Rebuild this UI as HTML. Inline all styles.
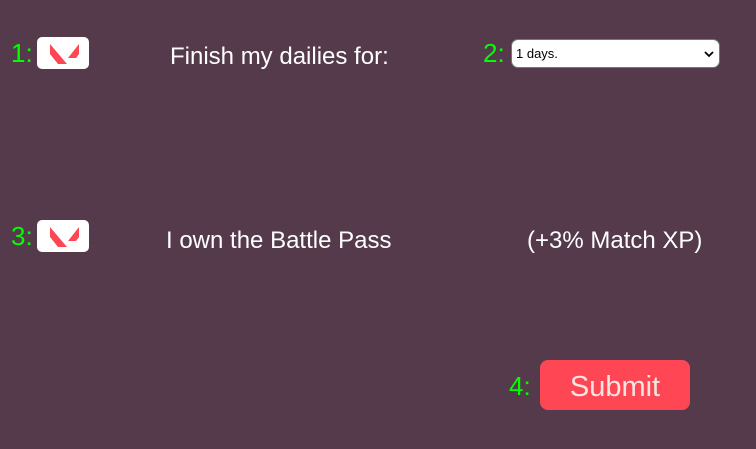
<!DOCTYPE html>
<html><head><style>
html,body{margin:0;padding:0;}
body{width:756px;height:449px;background:#553a4c;position:relative;overflow:hidden;font-family:"Liberation Sans",Arial,sans-serif;}
.n{position:absolute;color:#00ff00;font-size:26px;line-height:28px;}
.logo{position:absolute;width:52px;height:32px;background:#fff;border-radius:5px;}
.t{position:absolute;color:#fff;font-size:24px;line-height:26px;white-space:nowrap;}
.sel{position:absolute;left:511px;top:39px;width:209px;height:29px;background:#fff;border:1px solid #777;border-radius:7px;box-sizing:border-box;}
.btn{position:absolute;left:540px;top:360px;width:150px;height:50px;background:#ff4655;border-radius:8px;color:#f5e6e0;font-size:29px;line-height:54px;text-align:center;}
</style></head><body>
<div class="n" style="left:11px;top:39px">1:</div>
<div class="logo" style="left:37px;top:37px"><svg width="52" height="32" viewBox="37 37 52 32"><polygon points="50,44 67,64 58,64 50,54" fill="#ff4655"/><polygon points="79,44 79,54 76,58 68,58" fill="#ff4655"/></svg></div>
<div class="t" style="left:170px;top:44px">Finish my dailies for:</div>
<div class="n" style="left:483px;top:39px">2:</div>
<div class="sel"><span style="position:absolute;left:4px;top:6px;font-size:13px;color:#000">1 days.</span><svg style="position:absolute;right:5px;top:10px" width="10" height="8" viewBox="0 0 10 8"><path d="M1 2 L5 6 L9 2" stroke="#000" stroke-width="1.8" fill="none"/></svg></div>
<div class="n" style="left:11px;top:222px">3:</div>
<div class="logo" style="left:37px;top:220px"><svg width="52" height="32" viewBox="37 37 52 32"><polygon points="50,44 67,64 58,64 50,54" fill="#ff4655"/><polygon points="79,44 79,54 76,58 68,58" fill="#ff4655"/></svg></div>
<div class="t" style="left:166px;top:228px">I own the Battle Pass</div>
<div class="t" style="left:527px;top:228px">(+3% Match XP)</div>
<div class="n" style="left:509px;top:372px">4:</div>
<div class="btn">Submit</div>
</body></html>
